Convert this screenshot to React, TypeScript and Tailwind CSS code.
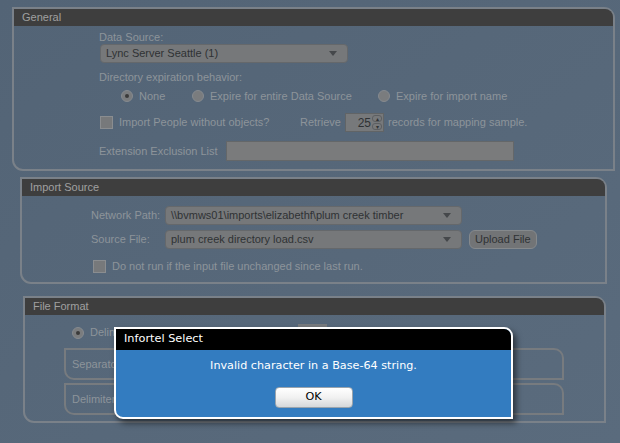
const Radio = ({ checked = false }: { checked?: boolean }) => (
  <span className="flex h-[12px] w-[12px] shrink-0 items-center justify-center rounded-full border border-[#858a8f] bg-[#7a7c7e]">
    {checked && <span className="h-[4px] w-[4px] rounded-full bg-[#3a3a3a]" />}
  </span>
);

const Checkbox = () => (
  <span className="h-[13px] w-[13px] shrink-0 border border-[#8a8d90] bg-[#77797b]" />
);

const Select = ({ value, width }: { value: string; width: string }) => (
  <div
    className={`flex h-[19px] ${width} items-center justify-between rounded-[4px] border border-[#65686b] bg-[#76787a] pl-[5px] pr-[10px] text-[11px] whitespace-nowrap text-[#2f3234]`}
  >
    <span>{value}</span>
    <span className="h-0 w-0 border-x-[4px] border-t-[5px] border-x-transparent border-t-[#45484b]" />
  </div>
);

const Header = ({ title }: { title: string }) => (
  <div className="flex h-[17px] items-center rounded-tr-[8px] bg-[#3e3e3e] pl-[8px] text-[11px] text-[#a0a0a0]">
    {title}
  </div>
);

export default function App() {
  return (
    <div className="relative h-[443px] w-[620px] overflow-hidden whitespace-nowrap bg-gradient-to-br from-[#536476] to-[#5a6b7d] font-[Liberation_Sans,Arial,sans-serif] text-[11px] text-[#8d949a]">
      <div className="flex flex-col pt-[7px]">
        {/* General */}
        <section className="ml-[12px] w-[603px] rounded-tr-[11px] rounded-bl-[11px] border-2 border-[#7a8189] pb-[8px]">
          <Header title="General" />
          <div className="flex flex-col pl-[85px]">
            <div className="mt-[5px] h-[13px] leading-[13px]">Data Source:</div>
            <div className="ml-[1px]">
              <Select value="Lync Server Seattle (1)" width="w-[248px]" />
            </div>
            <div className="mt-[8px] h-[13px] leading-[13px]">Directory expiration behavior:</div>
            <div className="mt-[5px] flex h-[14px] items-center pl-[22px]">
              <Radio checked />
              <span className="ml-[6px] w-[53px]">None</span>
              <Radio />
              <span className="ml-[6px] w-[168px]">Expire for entire Data Source</span>
              <Radio />
              <span className="ml-[6px]">Expire for import name</span>
            </div>
            <div className="mt-[10px] flex h-[19px] items-center pl-[1px]">
              <Checkbox />
              <span className="ml-[6px] w-[181px]">Import People without objects?</span>
              <span className="w-[45px]">Retrieve</span>
              <div className="flex h-[19px] w-[39px] items-center justify-end border border-[#616466] bg-[#77797b] pr-[1px] text-[12px] text-[#2f3234]">
                <span className="mr-[1px]">25</span>
                <div className="flex flex-col gap-[1px]">
                  <span className="flex h-[7px] w-[10px] items-center justify-center rounded-[3px] border border-[#5c5f62] text-[6px] leading-none">▴</span>
                  <span className="flex h-[7px] w-[10px] items-center justify-center rounded-[3px] border border-[#5c5f62] text-[6px] leading-none">▾</span>
                </div>
              </div>
              <span className="ml-[4px]">records for mapping sample.</span>
            </div>
            <div className="mt-[9px] flex h-[20px] items-center">
              <span className="w-[127px]">Extension Exclusion List</span>
              <div className="h-[20px] w-[288px] border border-[#646769] bg-[#7a7b7c]" />
            </div>
          </div>
        </section>

        {/* Import Source */}
        <section className="ml-[20px] mt-[6px] h-[107px] w-[587px] rounded-tr-[11px] rounded-bl-[11px] border-2 border-[#7a8189]">
          <Header title="Import Source" />
          <div className="flex flex-col pl-[69px]">
            <div className="mt-[10px] flex h-[19px] items-center">
              <span className="w-[74px]">Network Path:</span>
              <Select value="\\bvmws01\imports\elizabethf\plum creek timber" width="w-[297px]" />
            </div>
            <div className="mt-[5px] flex h-[19px] items-center">
              <span className="w-[74px]">Source File:</span>
              <Select value="plum creek directory load.csv" width="w-[297px]" />
              <div className="ml-[7px] flex h-[19px] items-center rounded-[6px] border border-[#85898c] bg-[#727476] px-[5px] text-[11px] text-[#2f3234]">
                Upload File
              </div>
            </div>
            <div className="mt-[11px] flex h-[13px] items-center pl-[2px]">
              <Checkbox />
              <span className="ml-[6px]">Do not run if the input file unchanged since last run.</span>
            </div>
          </div>
        </section>

        {/* File Format */}
        <section className="ml-[23px] mt-[12px] h-[127px] w-[583px] rounded-tr-[11px] rounded-bl-[11px] border-2 border-[#7a8189]">
          <Header title="File Format" />
          <div className="flex flex-col pl-[39px] pr-[40px]">
            <div className="mt-[9px] flex h-[17px] items-center pl-[8px]">
              <Radio checked />
              <span className="ml-[6px] w-[208px]">Delimited</span>
              <span className="h-[17px] w-[29px] bg-[#777a7d]" />
            </div>
            <div className="mt-[7px] flex h-[32px] items-center rounded-tr-[10px] rounded-bl-[10px] border-2 border-[#777b7f] pl-[6px]">
              Separator
            </div>
            <div className="mt-[3px] flex h-[32px] items-center rounded-tr-[10px] rounded-bl-[10px] border-2 border-[#777b7f] pl-[6px]">
              Delimiter
            </div>
          </div>
        </section>
      </div>

      {/* Dialog */}
      <div className="absolute left-[114px] top-[327px] flex h-[92px] w-[399px] flex-col overflow-hidden rounded-tr-[9px] rounded-bl-[9px] border-2 border-white bg-[#337cc0] font-[DejaVu_Sans,Verdana,sans-serif] shadow-[3px_4px_6px_rgba(0,0,0,0.55)]">
        <div className="flex h-[21px] items-center bg-black pl-[8px] text-[11.3px] text-white">Infortel Select</div>
        <div className="mt-[9px] text-center text-[11.2px] leading-[14px] text-white">
          Invalid character in a Base-64 string.
        </div>
        <div className="mt-[14px] flex justify-center">
          <button className="flex h-[21px] w-[78px] items-center justify-center rounded-[4px] border border-[#9aa4ad] bg-gradient-to-b from-white via-[#f1f1f1] to-[#d6d8da] text-[11.2px] text-black">
            OK
          </button>
        </div>
      </div>
    </div>
  );
}
